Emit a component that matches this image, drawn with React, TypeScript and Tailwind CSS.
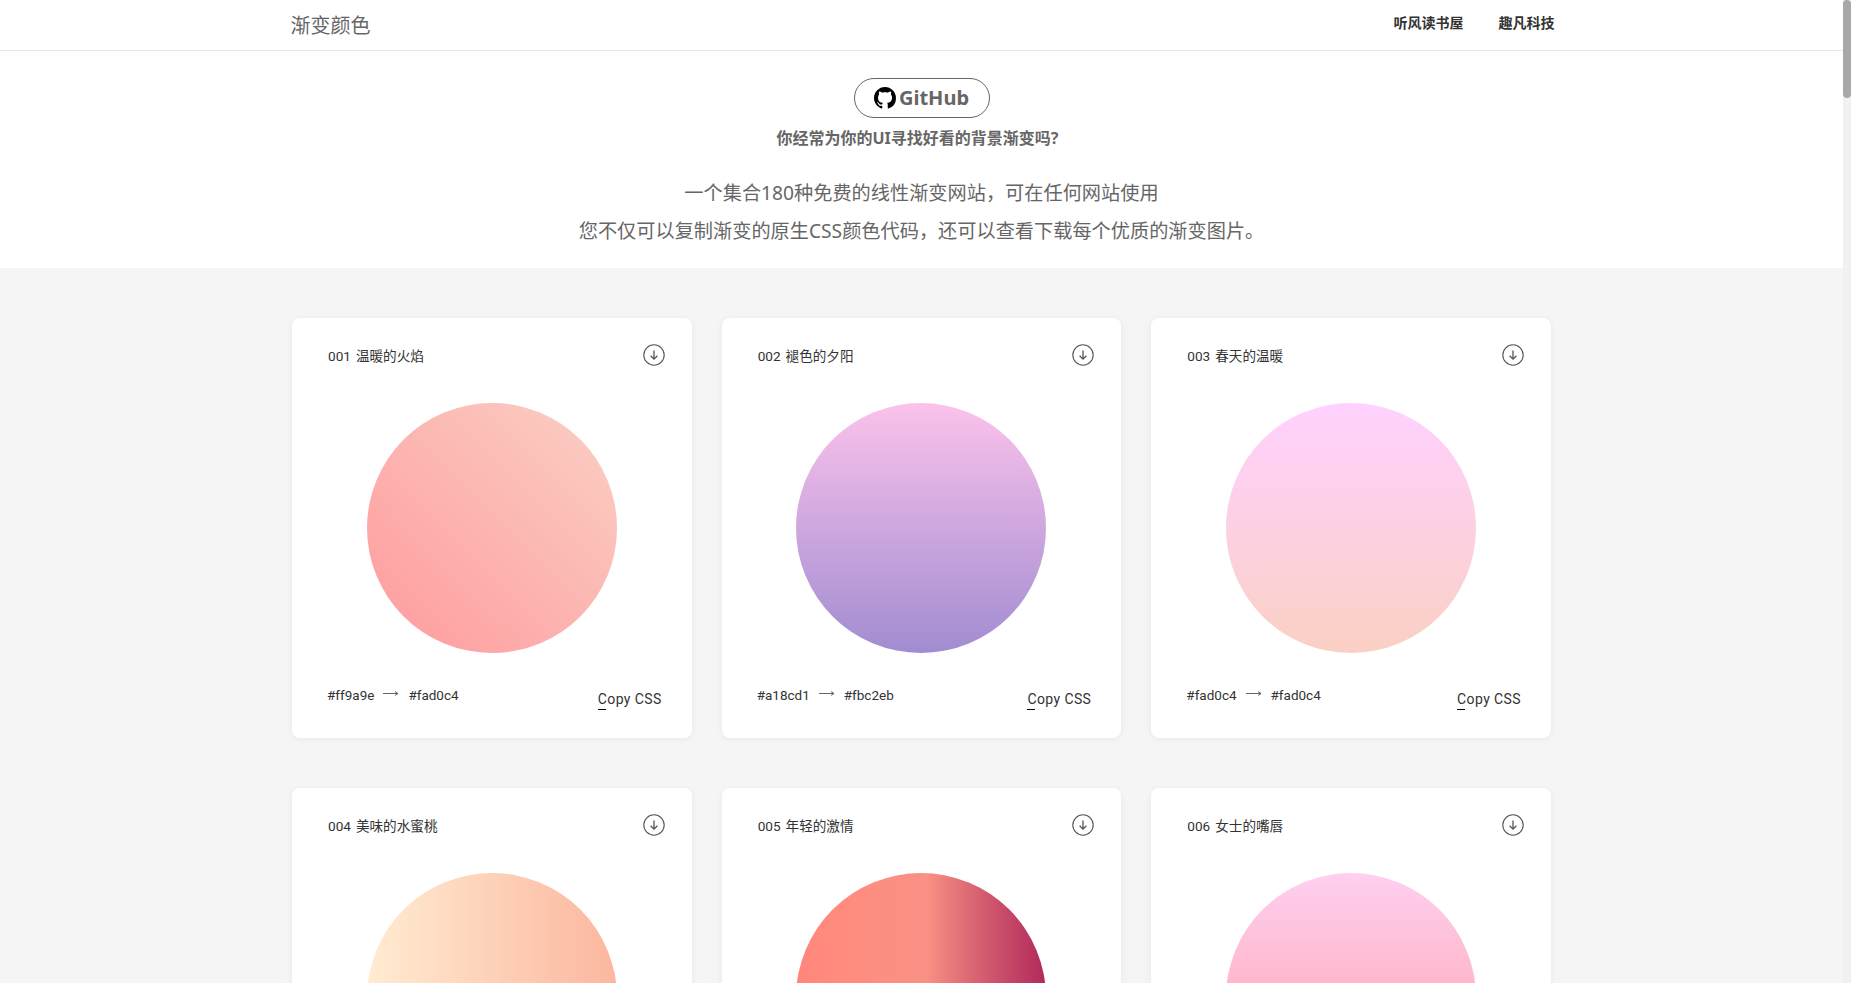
import React from "react";

const cards = [
  { n: "001", name: "温暖的火焰", from: "#ff9a9e", to: "#fad0c4", bg: "bg-[linear-gradient(45deg,#ff9a9e_0%,#fad0c4_99%,#fad0c4_100%)]" },
  { n: "002", name: "褪色的夕阳", from: "#a18cd1", to: "#fbc2eb", bg: "bg-[linear-gradient(to_top,#a18cd1_0%,#fbc2eb_100%)]" },
  { n: "003", name: "春天的温暖", from: "#fad0c4", to: "#fad0c4", bg: "bg-[linear-gradient(to_top,#fad0c4_0%,#ffd1ff_100%)]" },
  { n: "004", name: "美味的水蜜桃", from: "#ffecd2", to: "#fcb69f", bg: "bg-[linear-gradient(to_right,#ffecd2_0%,#fcb69f_100%)]" },
  { n: "005", name: "年轻的激情", from: "#ff8177", to: "#b12a5b", bg: "bg-[linear-gradient(to_right,#ff8177_0%,#ff867a_0%,#ff8c7f_21%,#f99185_52%,#cf556c_78%,#b12a5b_100%)]" },
  { n: "006", name: "女士的嘴唇", from: "#ff9a9e", to: "#fecfef", bg: "bg-[linear-gradient(to_top,#ff9a9e_0%,#fecfef_99%,#fecfef_100%)]" },
];

const CJK = "font-['Noto_Sans','Noto_Sans_CJK_SC',sans-serif]";
const RB = "font-['Roboto','Noto_Sans_CJK_SC',sans-serif]";

function GithubMark() {
  return (
    <svg viewBox="0 0 16 16" className="w-[22px] h-[22px]" fill="#000">
      <path d="M8 0C3.58 0 0 3.58 0 8c0 3.54 2.29 6.53 5.47 7.59.4.07.55-.17.55-.38 0-.19-.01-.82-.01-1.49-2.01.37-2.53-.49-2.69-.94-.09-.23-.48-.94-.82-1.13-.28-.15-.68-.52-.01-.53.63-.01 1.08.58 1.23.82.72 1.21 1.87.87 2.33.66.07-.52.28-.87.51-1.07-1.78-.2-3.64-.89-3.64-3.95 0-.87.31-1.59.82-2.15-.08-.2-.36-1.02.08-2.12 0 0 .67-.21 2.2.82.64-.18 1.32-.27 2-.27s1.36.09 2 .27c1.53-1.04 2.2-.82 2.2-.82.44 1.1.16 1.92.08 2.12.51.56.82 1.27.82 2.15 0 3.07-1.87 3.75-3.65 3.95.29.25.54.73.54 1.48 0 1.07-.01 1.93-.01 2.2 0 .21.15.46.55.38A8.01 8.01 0 0 0 16 8c0-4.42-3.58-8-8-8z" />
    </svg>
  );
}

function DownloadIcon() {
  return (
    <svg viewBox="0 0 22 22" className="w-[22px] h-[22px]" fill="none" stroke="#555" strokeWidth="1.1">
      <circle cx="11" cy="11" r="10.2" />
      <path d="M11 6.5v8.5M7.6 11.8 11 15.2l3.4-3.4" strokeWidth="1.3" />
    </svg>
  );
}

function Arrow() {
  return (
    <svg viewBox="0 0 16 8" className="w-4 h-2" fill="none" stroke="#666" strokeWidth="1">
      <path d="M0 3.5h15M12 1.6l3 1.9-3 1.9" />
    </svg>
  );
}

function Card({ c }: { c: (typeof cards)[number] }) {
  return (
    <div className="h-[420px] bg-white rounded-lg shadow-[0_1px_6px_rgba(0,0,0,0.06)] px-9 pt-[26px] flex flex-col">
      <div className="flex justify-between items-start h-[59px]">
        <span className={`text-[13.6px] leading-[22px] mt-[1px] text-[#333] ${RB}`}>
          {c.n}
          <span className="ml-[5px]">{c.name}</span>
        </span>
        <span className="-mr-[9px]"><DownloadIcon /></span>
      </div>
      <div className={`w-[250px] h-[250px] rounded-full self-center ${c.bg}`} />
      <div className={`flex justify-between mt-[29px] text-[#333] ${RB}`}>
        <div className="flex items-center h-[26px] text-[13.5px] -ml-[1px] gap-[9px]">
          <span>{c.from}</span>
          <span className="-mt-[3px]"><Arrow /></span>
          <span>{c.to}</span>
        </div>
        <span className="relative text-[14px] tracking-[0.4px] leading-[20px] mt-[7px] -mr-[6px]">
          Copy CSS
          <span className="absolute left-0 -bottom-px w-2 h-px bg-black" />
        </span>
      </div>
    </div>
  );
}

export default function App() {
  return (
    <div className={`h-screen overflow-hidden flex bg-[#f5f5f5] ${CJK}`}>
      <div className="flex-1 min-w-0">
        <header className="h-[51px] bg-white border-b border-[#e8e8e8]">
          <div className="w-[1262px] mx-auto flex justify-between items-start">
            <span className="text-[20px] leading-[52px] text-[#666]">渐变颜色</span>
            <nav className="flex gap-[35px] text-[14px] font-bold text-[#333] leading-[46px] -mr-[2px]">
              <span>听风读书屋</span>
              <span>趣凡科技</span>
            </nav>
          </div>
        </header>
        <section className="h-[217px] bg-white flex flex-col items-center">
          <div className="mt-[27px] w-[136px] h-10 rounded-full border border-[#666] flex items-center justify-center gap-[3px] text-[#666] text-[20px] font-bold">
            <GithubMark />
            <span>GitHub</span>
          </div>
          <p className="mt-[8px] pr-2 text-[16px] leading-[24px] font-bold text-[#666]">你经常为你的UI寻找好看的背景渐变吗?</p>
          <p className="mt-[24px] text-[19.2px] leading-[38.4px] text-[#666] text-center">
            一个集合180种免费的线性渐变网站，可在任何网站使用
            <br />
            您不仅可以复制渐变的原生CSS颜色代码，还可以查看下载每个优质的渐变图片。
          </p>
        </section>
        <main className="w-[1259px] mx-auto pt-[50px] grid grid-cols-3 gap-x-[30px] gap-y-[50px] content-start">
          {cards.map((c) => (
            <Card key={c.n} c={c} />
          ))}
        </main>
      </div>
      <div className="w-2 shrink-0 bg-[#f1f1f1]">
        <div className="h-[98px] bg-[#a8a8a8] rounded-[4px]" />
      </div>
    </div>
  );
}
